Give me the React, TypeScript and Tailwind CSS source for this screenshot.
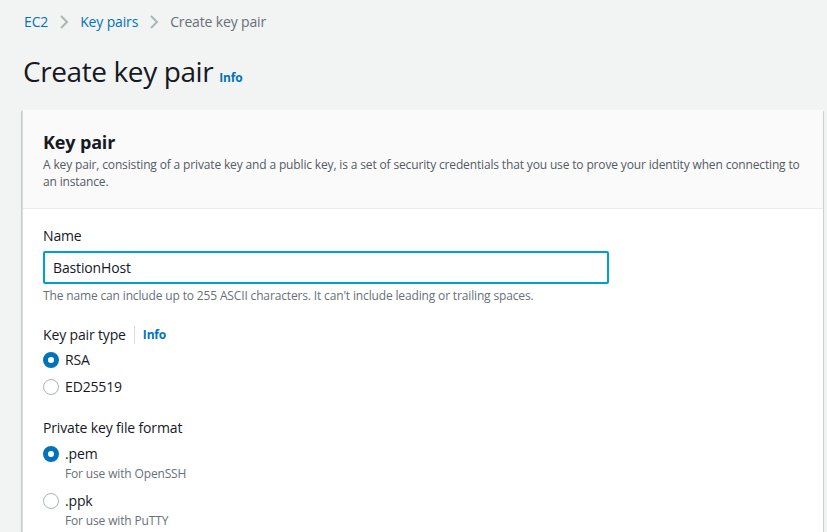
import React from "react";

function Radio({ checked }: { checked?: boolean }) {
  return checked ? (
    <span className="mt-[2px] inline-block h-[16px] w-[16px] shrink-0 rounded-full border-[5px] border-[#0073bb] bg-white" />
  ) : (
    <span className="mt-[2px] inline-block h-[16px] w-[16px] shrink-0 rounded-full border-[1.5px] border-[#aab7b8] bg-white" />
  );
}

function Option({ label, desc, checked }: { label: string; desc?: string; checked?: boolean }) {
  return (
    <div className="flex items-start gap-[6px]">
      <Radio checked={checked} />
      <div className="flex flex-col">
        <span className="text-[14px] leading-[20px] text-[#16191f]">{label}</span>
        {desc && <span className="mt-[2px] text-[12px] leading-[16px] text-[#687078]">{desc}</span>}
      </div>
    </div>
  );
}

function Chevron() {
  return (
    <svg width="10" height="14" viewBox="0 0 10 14" className="mx-[11px]">
      <path d="M2 1l6 6-6 6" fill="none" stroke="#aab7b8" strokeWidth="2" />
    </svg>
  );
}

export default function App() {
  return (
    <div
      className="min-h-[532px] bg-[#f2f3f3] pl-[22px] pr-[4px] tracking-[-0.15px] text-[#16191f]"
      style={{ fontFamily: '"Open Sans", "Noto Sans", sans-serif' }}
    >
      <nav className="flex items-center pl-[2px] pt-[12px] text-[14px] leading-[20px]">
        <span className="text-[#0073bb]">EC2</span>
        <Chevron />
        <span className="text-[#0073bb]">Key pairs</span>
        <Chevron />
        <span className="text-[#687078]">Create key pair</span>
      </nav>

      <div className="mt-[21px] flex items-baseline gap-[6px] pl-[1px]">
        <h1 className="text-[28px] leading-[36px] font-normal tracking-[-0.4px]">Create key pair</h1>
        <span className="text-[12px] font-bold text-[#0073bb]">Info</span>
      </div>

      <section className="mt-[21px] rounded-t-[1px] border-l border-[#d5dbdb] bg-white shadow-[0_1px_1px_0_rgba(0,28,36,0.3),1px_1px_1px_0_rgba(0,28,36,0.15),-1px_1px_1px_0_rgba(0,28,36,0.15)]">
        <header className="border-b border-[#eaeded] bg-[#fafafa] px-[20px] pb-[18px] pt-[20px]">
          <h2 className="text-[18px] leading-[24px] font-bold">Key pair</h2>
          <p className="mt-[2px] text-[12px] leading-[17px] text-[#545b64]">
            A key pair, consisting of a private key and a public key, is a set of security credentials that you use to prove your identity when connecting to an instance.
          </p>
        </header>

        <div className="flex flex-col gap-[21px] px-[20px] pb-[20px] pt-[17px]">
          <div>
            <label className="block text-[14px] leading-[20px]">Name</label>
            <div className="mt-[5px] flex h-[33px] w-[566px] items-center rounded-[2px] border-2 border-[#00a1c9] bg-white px-[8px] text-[14px]">
              BastionHost
            </div>
            <p className="mt-[4px] text-[12px] leading-[16px] text-[#687078]">
              The name can include up to 255 ASCII characters. It can&apos;t include leading or trailing spaces.
            </p>
          </div>

          <div>
            <div className="flex items-center text-[14px] leading-[20px]">
              <span>Key pair type</span>
              <span className="mx-[8px] h-[18px] w-px bg-[#d5dbdb]" />
              <span className="text-[12px] font-bold text-[#0073bb]">Info</span>
            </div>
            <div className="mt-[5px] flex flex-col gap-[7px]">
              <Option label="RSA" checked />
              <Option label="ED25519" />
            </div>
          </div>

          <div>
            <label className="block text-[14px] leading-[20px]">Private key file format</label>
            <div className="mt-[6px] flex flex-col gap-[9px]">
              <Option label=".pem" desc="For use with OpenSSH" checked />
              <Option label=".ppk" desc="For use with PuTTY" />
            </div>
          </div>
        </div>
      </section>
    </div>
  );
}
